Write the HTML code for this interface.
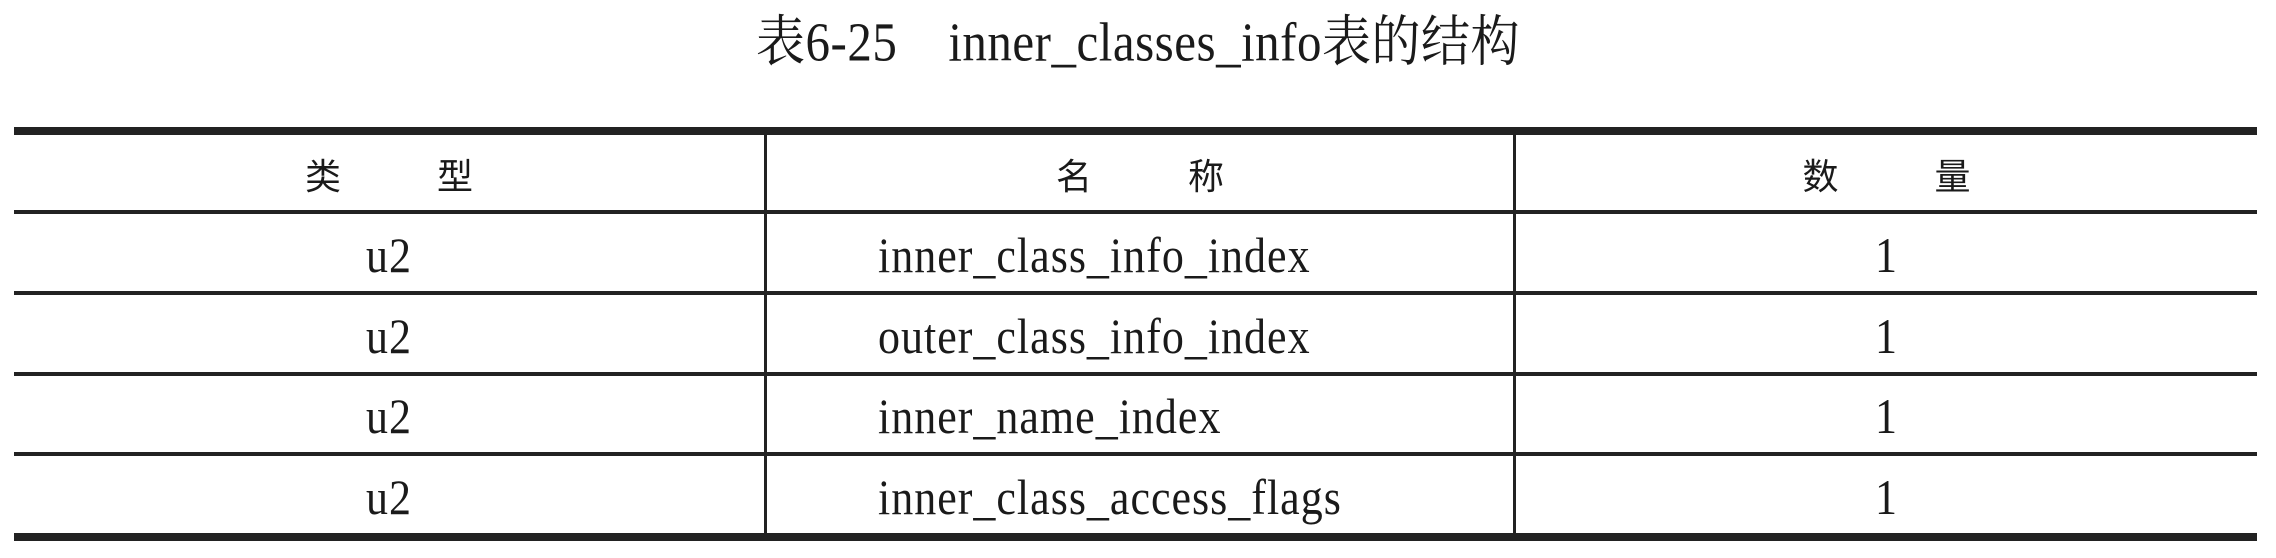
<!DOCTYPE html>
<html><head><meta charset="utf-8"><style>
body{margin:0;width:2276px;height:558px;background:#fff;position:relative;overflow:hidden;font-family:"Liberation Serif","Noto Serif CJK SC",serif;color:#1a1a1a}
.h{position:absolute;left:14px;width:2243px;background:#222}
.v{position:absolute;top:128px;height:412px;width:3px;background:#222}
.t{position:absolute;height:60px;display:flex;align-items:center;font-size:44px;letter-spacing:1px;transform:scaleY(1.12);white-space:nowrap}
.c{justify-content:center}
.hd{font-family:"Noto Sans CJK SC",sans-serif;font-size:36px;letter-spacing:0;transform:none}
</style></head><body>
<div class="t c" style="left:0;width:2276px;top:8px;font-size:49px;letter-spacing:0.5px">表6-25&nbsp;&nbsp;&nbsp;&nbsp;inner_classes_info表的结构</div>
<div class="h" style="top:127px;height:8px"></div>
<div class="h" style="top:210px;height:4px"></div>
<div class="h" style="top:291px;height:4px"></div>
<div class="h" style="top:372px;height:4px"></div>
<div class="h" style="top:452px;height:4px"></div>
<div class="h" style="top:533px;height:8px"></div>
<div class="v" style="left:764px"></div>
<div class="v" style="left:1513px"></div>

<div class="t c hd" style="left:14px;width:750px;top:144px">类<span style="display:inline-block;width:96px"></span>型</div>
<div class="t c hd" style="left:766px;width:748px;top:144px">名<span style="display:inline-block;width:96px"></span>称</div>
<div class="t c hd" style="left:1516px;width:741px;top:144px">数<span style="display:inline-block;width:96px"></span>量</div>

<div class="t c" style="left:14px;width:750px;top:225px">u2</div>
<div class="t" style="left:878px;top:225px">inner_class_info_index</div>
<div class="t c" style="left:1516px;width:741px;top:225px">1</div>

<div class="t c" style="left:14px;width:750px;top:306px">u2</div>
<div class="t" style="left:878px;top:306px">outer_class_info_index</div>
<div class="t c" style="left:1516px;width:741px;top:306px">1</div>

<div class="t c" style="left:14px;width:750px;top:386px">u2</div>
<div class="t" style="left:878px;top:386px">inner_name_index</div>
<div class="t c" style="left:1516px;width:741px;top:386px">1</div>

<div class="t c" style="left:14px;width:750px;top:467px">u2</div>
<div class="t" style="left:878px;top:467px">inner_class_access_flags</div>
<div class="t c" style="left:1516px;width:741px;top:467px">1</div>
</body></html>
